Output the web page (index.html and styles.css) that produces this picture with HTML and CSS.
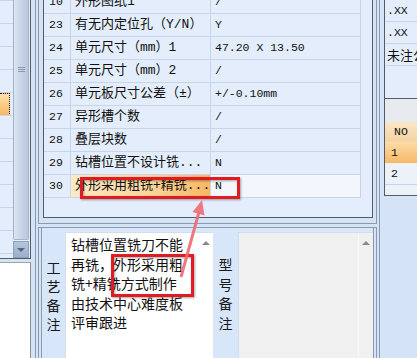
FILE: index.html
```html
<!DOCTYPE html>
<html lang="zh-CN">
<head>
    <meta charset="UTF-8">
    <meta name="viewport" content="width=device-width, initial-scale=1.0">
    <title>工艺参数</title>
    <link rel="stylesheet" href="styles.css">
</head>
<body>
    <div class="screen">
        <div class="left">
            <div class="list-box">
                <div class="list">
                    <div class="list-row"></div>
                    <div class="list-row"></div>
                    <div class="list-row"></div>
                    <div class="list-row"></div>
                    <div class="list-row"><div class="list-sel"></div></div>
                    <div class="list-row"></div>
                    <div class="list-row"></div>
                    <div class="list-row"></div>
                    <div class="list-row"></div>
                    <div class="list-row"></div>
                    <div class="list-row"></div>
                    <div class="list-row"></div>
                </div>
                <div class="vscroll">
                    <div class="thumb"><span class="grip"></span></div>
                    <div class="scroll-btn"><span class="tri-down"></span></div>
                </div>
            </div>
            <div class="blank-box"></div>
        </div>

        <div class="center">
            <div class="frame">
                <div class="top-group">
                    <div class="grid-panel">
                        <div class="props">
                            <div class="prop-row"><div class="c-no">10</div><div class="c-name">外形图纸1</div><div class="c-val">/</div></div>
                            <div class="prop-row"><div class="c-no">23</div><div class="c-name">有无内定位孔（Y/N）</div><div class="c-val">Y</div></div>
                            <div class="prop-row"><div class="c-no">24</div><div class="c-name">单元尺寸（mm）1</div><div class="c-val">47.20 X 13.50</div></div>
                            <div class="prop-row"><div class="c-no">25</div><div class="c-name">单元尺寸（mm）2</div><div class="c-val">/</div></div>
                            <div class="prop-row"><div class="c-no">26</div><div class="c-name">单元板尺寸公差（±）</div><div class="c-val">+/-0.10mm</div></div>
                            <div class="prop-row"><div class="c-no">27</div><div class="c-name">异形槽个数</div><div class="c-val">/</div></div>
                            <div class="prop-row"><div class="c-no">28</div><div class="c-name">叠层块数</div><div class="c-val">/</div></div>
                            <div class="prop-row"><div class="c-no">29</div><div class="c-name">钻槽位置不设计铣...</div><div class="c-val">N</div></div>
                            <div class="prop-row"><div class="c-no">30</div><div class="c-name selected">外形采用粗铣+精铣...</div><div class="c-val selected">N</div></div>
                        </div>
                    </div>
                </div>
                <div class="bottom-group">
                    <div class="memo-row">
                        <div class="memo-label first">工<br>艺<br>备<br>注</div>
                        <div class="memo">
                            <div class="memo-text">钻槽位置铣刀不能再铣，外形采用粗铣+精铣方式制作由技术中心难度板评审跟进</div>
                            <div class="memo-scroll"><span class="tri-up"></span></div>
                        </div>
                        <div class="memo-label second">型<br>号<br>备<br>注</div>
                        <div class="memo readonly">
                            <div class="memo-text"></div>
                            <div class="memo-scroll"><span class="tri-up"></span></div>
                        </div>
                    </div>
                </div>
            </div>
        </div>

        <div class="right">
            <div class="tol-box">
                <div class="tol-row">.XX</div>
                <div class="tol-row">.XX</div>
                <div class="tol-row cn">未注公差</div>
            </div>
            <div class="no-box">
                <div class="no-bar"></div>
                <div class="no-head">NO</div>
                <div class="no-row selected">1</div>
                <div class="no-row">2</div>
            </div>
        </div>

        <!-- annotation drawn over the screenshot -->
        <svg class="annot" width="417" height="358" viewBox="0 0 417 358">
            <rect class="mark" x="81.5" y="178.5" width="157" height="19"/>
            <rect class="mark" x="112.5" y="255.5" width="80" height="40"/>
            <line class="arrow-line" x1="181" y1="277" x2="199" y2="212"/>
            <polygon class="arrow-head" points="202,200 192.5,212 204.5,215.5"/>
        </svg>
    </div>
</body>
</html>
```

FILE: styles.css
```css
body {
    margin: 0;
    padding: 0;
    background-color: #d5e3f7;
    font-family: "Noto Sans CJK SC", sans-serif;
    color: #111;
    overflow: hidden;
}
.screen {
    position: relative;
    display: flex;
    width: 417px;
    height: 358px;
    overflow: hidden;
}

/* left list */
.left {
    width: 33px;
    display: flex;
    flex-direction: column;
}
.list-box {
    display: flex;
    width: 30px;
    height: 258px;
    border-right: 1px solid #555b63;
    border-bottom: 1px solid #555b63;
    background-color: #e3edfb;
}
.list {
    width: 13px;
    overflow: hidden;
}
.list-row {
    height: 22px;
    border-top: 1px solid #c6d5ea;
}
.list-sel {
    width: 9px;
    height: 21px;
    border: 1px dotted #222;
    border-left: none;
    background: linear-gradient(to bottom, #fde2ae, #f8b760);
}
.vscroll {
    width: 17px;
    display: flex;
    flex-direction: column;
}
.thumb {
    flex: 1;
    margin: 0 1px 1px 0;
    border: 1px solid #a3b3ca;
    border-top: none;
    border-radius: 0 0 2px 2px;
    background: linear-gradient(to right, #dbe5f2, #c4d1e3 60%, #b9c8dc);
    display: flex;
    justify-content: center;
    padding-top: 67px;
    box-sizing: border-box;
}
.grip {
    width: 7px;
    height: 6px;
    background: repeating-linear-gradient(to bottom, #8a9bb3 0 1px, transparent 1px 2px);
}
.scroll-btn {
    height: 17px;
    margin-right: 1px;
    background: linear-gradient(to bottom, #b4c4da, #9db0ca);
    border: 1px solid #8fa2bd;
    box-sizing: border-box;
    display: flex;
    align-items: center;
    justify-content: center;
}
.tri-down {
    width: 0;
    height: 0;
    border-left: 4px solid transparent;
    border-right: 4px solid transparent;
    border-top: 4px solid #56657a;
}
.blank-box {
    flex: 1;
    margin-top: 3px;
    background-color: #fff;
    border-top: 1px solid #9aa3ae;
    border-right: 1px solid #8a8f96;
}

/* center */
.center {
    width: 358px;
    padding: 0 4px;
    box-sizing: border-box;
    display: flex;
}
.frame {
    flex: 1;
    border-left: 1px solid #8d9aae;
    border-right: 1px solid #8d9aae;
    padding: 0 2px;
    display: flex;
    flex-direction: column;
}
.top-group {
    border: 1px solid #8d9aae;
    border-top: none;
    padding: 0 3px 5px 4px;
}
.grid-panel {
    height: 217px;
    border: 1px solid #555b63;
    border-top: none;
    background-color: #e3edfb;
    overflow: hidden;
}
.props {
    margin-top: -9px;
}
.prop-row {
    display: grid;
    grid-template-columns: 27px 140px 150px;
}
.prop-row div {
    height: 23px;
    line-height: 22px;
    box-sizing: border-box;
    border-right: 1px solid #c6d5ea;
    border-bottom: 1px solid #c6d5ea;
    white-space: nowrap;
    overflow: hidden;
}
.c-no {
    padding-left: 5px;
    font-family: "Liberation Mono", monospace;
    font-size: 11.5px;
}
.c-name {
    padding-left: 4px;
    font-family: "Liberation Mono", "Noto Sans CJK SC", monospace;
    font-size: 13px;
}
.c-val {
    padding-left: 4px;
    font-family: "Liberation Mono", "Noto Sans CJK SC", monospace;
    font-size: 11.5px;
}
.c-name.selected {
    background: linear-gradient(to right, #fde9c6, #fbd59b 55%, #f7b764);
}
.c-val.selected {
    background-color: #f3f7fd;
}

.bottom-group {
    flex: 1;
    margin-top: 3px;
    border: 1px solid #8d9aae;
    border-bottom: none;
    padding: 0 2px;
    display: flex;
}
.memo-row {
    flex: 1;
    display: flex;
    border-left: 1px solid #8d9aae;
    border-right: 1px solid #8d9aae;
    background-color: #d8e6fa;
}
.memo-label {
    font-size: 14px;
    text-align: center;
    color: #1a1a1a;
}
.memo-label.first {
    width: 23px;
    padding-top: 30px;
    line-height: 19px;
}
.memo-label.second {
    width: 25px;
    padding-top: 27px;
    line-height: 19.7px;
}
.memo {
    display: flex;
    justify-content: space-between;
    margin-top: 4px;
    background-color: #fff;
    border-left: 1px solid #d3deec;
    border-top: 1px solid #d3deec;
}
.memo:nth-child(2) {
    width: 147px;
}
.memo.readonly {
    flex: 1;
    background-color: #f0f0f0;
}
.memo-text {
    flex: 0 0 114px;
    padding: 2px 0 0 5px;
    font-size: 14px;
    line-height: 19.5px;
    color: #111;
}
.memo-scroll {
    width: 15px;
    display: flex;
    justify-content: center;
    padding-top: 8px;
    box-sizing: border-box;
}
.memo.readonly .memo-scroll {
    border-left: 1px solid #fafafa;
}
.tri-up {
    width: 0;
    height: 0;
    border-left: 4px solid transparent;
    border-right: 4px solid transparent;
    border-bottom: 4px solid #8a8a8a;
}

/* right */
.right {
    flex: 1;
    display: flex;
    flex-direction: column;
}
.tol-box {
    height: 98px;
    border-left: 1px solid #555b63;
    background-color: #e3edfb;
}
.tol-row {
    height: 22px;
    line-height: 21px;
    box-sizing: border-box;
    border-bottom: 1px solid #c6d5ea;
    padding-left: 2px;
    font-family: "Liberation Mono", monospace;
    font-size: 11.5px;
    white-space: nowrap;
    overflow: hidden;
}
.tol-row.cn {
    font-family: "Noto Sans CJK SC", sans-serif;
    font-size: 13px;
}
.no-box {
    height: 96px;
    border: 1px solid #555b63;
    border-right: none;
    background-color: #edf2f9;
    font-family: "Liberation Mono", monospace;
    font-size: 11.5px;
}
.no-bar {
    height: 23px;
    background-color: #e7eaee;
}
.no-head {
    height: 20px;
    line-height: 20px;
    padding-left: 9px;
    background: linear-gradient(to bottom, #fae6c6, #f3d3a2);
}
.no-row {
    height: 22px;
    line-height: 21px;
    padding-left: 6px;
    box-sizing: border-box;
    border-bottom: 1px solid #c6d5ea;
}
.no-row.selected {
    height: 21px;
    background: linear-gradient(to bottom, #fcdca8, #f7b866);
    border-bottom: none;
}

/* annotation overlay */
.annot {
    position: absolute;
    left: 0;
    top: 0;
    pointer-events: none;
}
.mark {
    fill: none;
    stroke: #e11b22;
    stroke-width: 3;
    filter: drop-shadow(1px 1px 1px rgba(0, 0, 0, 0.35));
}
.arrow-line {
    stroke: #ef6b72;
    stroke-width: 3;
    opacity: 0.9;
}
.arrow-head {
    fill: #ef6b72;
    opacity: 0.9;
}
```
